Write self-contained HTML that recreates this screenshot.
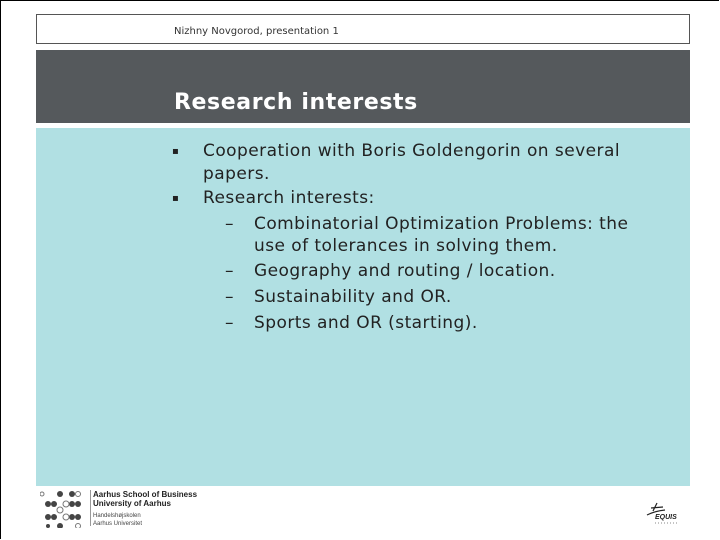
<!DOCTYPE html>
<html><head><style>
body{margin:0;width:720px;height:540px;background:#fff;position:relative;overflow:hidden;font-family:"DejaVu Sans","Liberation Sans",sans-serif;}
.frame{position:absolute;left:0;top:0;width:718px;height:538px;border:1px solid #000;border-right:none;border-bottom:none;}
.hdr{position:absolute;left:36px;top:14px;width:652px;height:28px;border:1px solid #555;}
.hdr span{position:absolute;left:137px;top:11px;font-size:10px;color:#333;}
.band{position:absolute;left:36px;top:50px;width:654px;height:73px;background:#55595c;}
.band h1{position:absolute;left:138px;top:40px;margin:0;font-size:22px;letter-spacing:0.6px;color:#fff;font-weight:bold;}
.blue{position:absolute;left:36px;top:128px;width:654px;height:358px;background:#b1e0e3;}
.t{position:absolute;font-size:17px;letter-spacing:0.45px;color:#222;white-space:nowrap;}
.b{position:absolute;font-size:10px;color:#222;}
</style></head><body>
<div class="frame"></div>
<div class="hdr"><span>Nizhny Novgorod, presentation 1</span></div>
<div class="band"><h1>Research interests</h1></div>
<div class="blue"></div>
<div class="b" style="left:172px;top:146px">&#9642;</div>
<div class="t" style="left:203px;top:141px">Cooperation with Boris Goldengorin on several</div>
<div class="t" style="left:203px;top:164px">papers.</div>
<div class="b" style="left:172px;top:193px">&#9642;</div>
<div class="t" style="left:203px;top:188px">Research interests:</div>
<div class="t" style="left:225px;top:214px">–</div>
<div class="t" style="left:254px;top:214px">Combinatorial Optimization Problems: the</div>
<div class="t" style="left:254px;top:236px">use of tolerances in solving them.</div>
<div class="t" style="left:225px;top:261px">–</div>
<div class="t" style="left:254px;top:261px">Geography and routing / location.</div>
<div class="t" style="left:225px;top:287px">–</div>
<div class="t" style="left:254px;top:287px">Sustainability and OR.</div>
<div class="t" style="left:225px;top:313px">–</div>
<div class="t" style="left:254px;top:313px">Sports and OR (starting).</div>
<svg style="position:absolute;left:40px;top:490px" width="45" height="38">
<g fill="#444"><circle cx="20" cy="4" r="3"/><circle cx="8" cy="14" r="3"/><circle cx="14" cy="14" r="3"/><circle cx="32" cy="14" r="3"/><circle cx="38" cy="14" r="3"/><circle cx="8" cy="27" r="3"/><circle cx="14" cy="27" r="3"/><circle cx="32" cy="27" r="3"/><circle cx="38" cy="27" r="3"/><circle cx="20" cy="36" r="3"/><circle cx="32" cy="4" r="3"/><circle cx="8" cy="36" r="2"/></g>
<g fill="none" stroke="#777"><circle cx="26" cy="14" r="3"/><circle cx="26" cy="27" r="3"/><circle cx="20" cy="20" r="3"/><circle cx="38" cy="4" r="2.5"/><circle cx="38" cy="36" r="2.5"/><circle cx="2" cy="4" r="2"/></g>
</svg>
<div style="position:absolute;left:90px;top:490px;width:1px;height:36px;background:#999"></div>
<div style="position:absolute;left:93px;top:490px;font:bold 8px 'Liberation Sans',sans-serif;color:#222;line-height:9px">Aarhus School of Business<br>University of Aarhus</div>
<div style="position:absolute;left:93px;top:512px;font:6px 'Liberation Sans',sans-serif;color:#444;line-height:8px">Handelshøjskolen<br>Aarhus Universitet</div>
<svg style="position:absolute;left:645px;top:495px" width="40" height="35">
<path d="M12 8 L8 16 M6 13 L18 12 M2 20 Q10 16 20 15" stroke="#222" fill="none" stroke-width="1.2"/>
<text x="10" y="24" font-size="7" font-style="italic" font-weight="bold" font-family="Liberation Sans" fill="#222">EQUIS</text>
<path d="M10 28 H34" stroke="#888" stroke-dasharray="1 2"/>
</svg>
</body></html>
